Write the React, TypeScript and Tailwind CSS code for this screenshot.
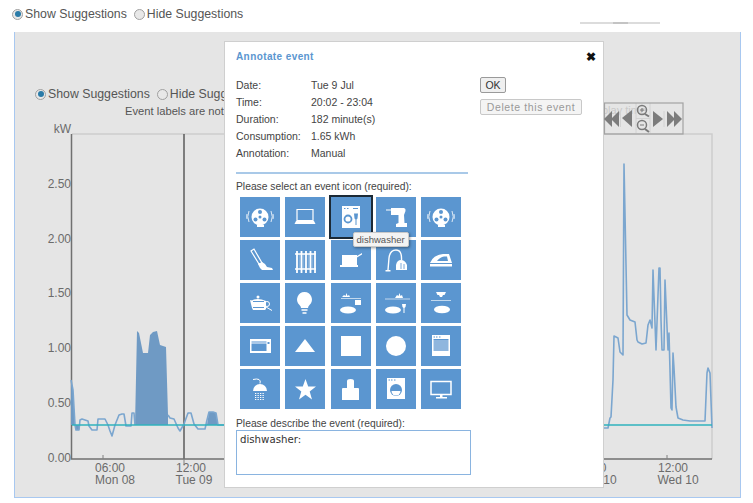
const linePts = "71,380 73,390 75,425 76,430 79,430 80,420 82,419 88,421 89,426 92,430 97,430 98,419 105,419 108,425 110,431 112,436 115,425 119,415 122,414 124,414 126,426 131,426 132,413 134,413 135,425"
const fillPts = "135,425 137,331 139,333 143,353 148,353 150,335 153,332 157,331 160,345 166,347 168,415 168,425"
const lineMid = "168,415 170,418 174,419 178,428 180,431 184,424 188,413 191,413 194,424 198,429 205,429 207,420 209,412 213,412 216,413 218,425 224,425"
const lineRight = "604,428 608,428 610,418 611,417 613,380 614,336 618,338 620,352 623,355 624,164 627,315 630,320 635,322 637,340 638,342 642,344 646,343 648,325 650,320 652,328 653,270 656,350 659,268 660,268 661,320 662,350 664,350 665,280 668,350 669,333 671,408 672,410 673,353 674,368 676,407 678,418 683,420 690,421 705,421 707,373 708,368 710,373 712,428"

function Radio({ checked }: { checked?: boolean }) {
  return (
    <span className="w-[11px] h-[11px] rounded-full border border-[#a0a0a0] bg-[#e8e8e8] flex items-center justify-center shrink-0">
      {checked && <span className="w-[6px] h-[6px] rounded-full bg-[#2a7ba8]" />}
    </span>
  )
}

function RadioRow() {
  return (
    <div className="flex items-center text-[12.300px] text-[#555] whitespace-nowrap">
      <Radio checked />
      <span className="ml-[2px]">Show Suggestions</span>
      <span className="w-[7px]" />
      <Radio />
      <span className="ml-[2px]">Hide Suggestions</span>
    </div>
  )
}

function Chart() {
  return (
    <svg width="727" height="466" viewBox="14 32 727 466" className="block">
      <path d="M72 134H712V459" fill="none" stroke="#cdcdcd" strokeWidth="1.5" />
      <path d="M71.500 134V459H712" fill="none" stroke="#707070" strokeWidth="1.5" />
      <path d="M184 134V459" stroke="#5a5a5a" strokeWidth="1.5" />
      <path d="M103 455V459M184 455V465M667 455V459" stroke="#808080" />
      <polygon points="71,380 73,390 75,425 71,425" fill="#6f9ac4" />
      <polygon points="76,425 76,430 79,430 80,425" fill="#6f9ac4" />
      <polygon points={fillPts} fill="#6f9ac4" />
      <polygon points="207,425 209,412 213,412 216,413 218,425" fill="#6f9ac4" />
      {[linePts, lineMid, lineRight].map((p) => (
        <polyline key={p} points={p} fill="none" stroke="#7ba6cf" strokeWidth="1.6" strokeLinejoin="round" />
      ))}
      <path d="M72 425H712" stroke="#2fb2bd" strokeWidth="1.5" />
      <g fill="#6b6b6b" fontSize="12" fontFamily="Liberation Sans, sans-serif" textAnchor="end">
        <text x="71" y="133">kW</text>
        <text x="71" y="188">2.50</text>
        <text x="71" y="243">2.00</text>
        <text x="71" y="297">1.50</text>
        <text x="71" y="352">1.00</text>
        <text x="71" y="407">0.50</text>
        <text x="71" y="462">0.00</text>
      </g>
      <g fill="#6b6b6b" fontSize="12" fontFamily="Liberation Sans, sans-serif" textAnchor="middle">
        <text x="110" y="472">06:00</text>
        <text x="115" y="484">Mon 08</text>
        <text x="191" y="472">12:00</text>
        <text x="194" y="484">Tue 09</text>
        <text x="603" y="472">0</text>
        <text x="610" y="484">10</text>
        <text x="673" y="472">12:00</text>
        <text x="678" y="484">Wed 10</text>
      </g>
      {/* pan / zoom controls */}
      <text x="646" y="114" fontSize="11" textAnchor="end" fill="#c9c9c9" fontFamily="Liberation Sans, sans-serif">display time</text>
      <path d="M620.500 111V127M636 103V134M650 103V134M664 111V127M636 118.500H650" stroke="#d2d2d2" />
      <rect x="604.500" y="103" width="78.500" height="31" fill="none" stroke="#a2a2a2" strokeWidth="1.2" />
      <g fill="#7c7c7c">
        <path d="M604 119L612 111V127ZM611 119L619 111V127Z" />
        <path d="M622 118L632 110V127Z" />
        <path d="M653 111L663 119L653 127Z" />
        <path d="M667 111L675 119L667 127ZM674 111L682 119L674 127Z" />
      </g>
      <g fill="none" stroke="#7a7a7a" strokeWidth="1.5">
        <circle cx="642" cy="110" r="4.500" />
        <path d="M645 114L649 116.500" strokeWidth="2" />
        <path d="M640 110H644M642 108V112" strokeWidth="1" />
        <circle cx="642" cy="125" r="4.500" />
        <path d="M645 129L649 132" strokeWidth="2" />
        <path d="M640 125H644" strokeWidth="1" />
      </g>
    </svg>
  )
}

const S = "white"
const B = "#5b96d0"

const fan = (
  <g>
    <circle cx="20" cy="20" r="8.500" fill={S} />
    <circle cx="20" cy="20" r="1.500" fill={B} />
    <circle cx="20" cy="15" r="2" fill={B} />
    <circle cx="15.500" cy="22.500" r="2" fill={B} />
    <circle cx="24.500" cy="22.500" r="2" fill={B} />
    <path d="M9 14q-2.500 6 0 11M31 14q2.500 6 0 11M7 17q-.7 3 0 5M33 17q.7 3 0 5" fill="none" stroke={S} strokeWidth=".8" />
    <path d="M17 28h7v2h-7z" fill={S} />
  </g>
)

const icons: React.ReactNode[] = [
  <g key="fan">{fan}</g>,
  // laptop
  <g key="laptop">
    <path d="M12 12.500h16v11H12z" fill="none" stroke={S} strokeWidth="1.200" />
    <path d="M11 24h18l1.500 3h-21z" fill={S} />
  </g>,
  // dishwasher
  <g key="dish">
    <path d="M11 9h18v22H11z" fill={S} />
    <path d="M13 11.500h1.500M16 11.500h1.500M22 11.500h5" stroke={B} strokeWidth="1" />
    <circle cx="17" cy="22" r="3.500" fill="none" stroke={B} strokeWidth="1.800" />
    <path d="M23 16.500h4l-.5 5-1 1v5.500h-1v-5.500l-1-1z" fill={B} />
  </g>,
  // drill
  <g key="drill">
    <path d="M10 12.500h5v1h-5z" fill={S} />
    <path d="M15 11h13q2 .5 1.500 3l-1.500 4 .5 8h2.500v4H20v-3l2.500-1v-8H15z" fill={S} />
  </g>,
  <g key="fan2">{fan}</g>,
  // mower
  <g key="mower">
    <path d="M11 11l3-2 8 14-3 1z" fill="none" stroke={S} strokeWidth="1.200" />
    <path d="M18 24l4-2 3 2 2 3 5 1 1 2H22l-2-2z" fill={S} />
  </g>,
  // radiator
  <g key="rad">
    <path d="M10 14h21M10 29h21" stroke={S} strokeWidth="1.500" />
    <path d="M12 11v22M16.500 11v22M21 11v22M25.500 11v22M30 11v22" stroke={S} strokeWidth="1.800" />
    <path d="M14.250 14v15M18.750 14v15M23.250 14v15M27.750 14v15" stroke={S} strokeWidth=".6" opacity=".5" />
  </g>,
  // hob
  <g key="hob">
    <path d="M11 15h15v10H11z" fill={S} />
    <path d="M26 16l5-3v1.500l-5 3z" fill={S} />
    <path d="M9 25h18v2H9z" fill={S} />
  </g>,
  // vacuum
  <g key="vac">
    <path d="M12 30l1-12q1-8 7-8t5.500 10" fill="none" stroke={S} strokeWidth="1.400" />
    <path d="M9.500 30h5v1.500h-5z" fill={S} />
    <path d="M20 30v-5q1-5 5-5t6 5v5z" fill={S} />
    <path d="M25 23v6M28 24v5" stroke={B} strokeWidth=".8" />
  </g>,
  // iron
  <g key="iron">
    <path d="M9 23q3-8 13-9h6l3 9z" fill={S} />
    <path d="M16 21q3-4 7-4.500h3l1 4.500z" fill={B} />
    <path d="M9 24h22v2.500H9z" fill={S} />
  </g>,
  // teapot
  <g key="pot">
    <circle cx="18" cy="14" r="1.500" fill={S} />
    <path d="M11 18q6-4 15 0z" fill={S} />
    <path d="M10 17l3 1v7h11v-7h2v8l-1 1H13l-1-2z" fill={S} />
    <path d="M13 19h11v5H13z" fill={S} />
    <path d="M26 24l6 3.500" stroke={S} strokeWidth="1" />
    <circle cx="27" cy="21" r="2.500" fill="none" stroke={S} strokeWidth="1" />
  </g>,
  // bulb
  <g key="bulb">
    <path d="M19.500 9a7.500 7.500 0 0 1 5 13q-1.500 1.500-1.500 3h-7q0-1.500-1.500-3a7.500 7.500 0 0 1 5-13z" fill={S} />
    <path d="M16.500 26h6v2h-6zM17.500 29h4v2h-4z" fill={S} opacity=".75" />
  </g>,
  // light over ellipse + square
  <g key="e1">
    <ellipse cx="17" cy="27" rx="8" ry="3.500" fill={S} />
    <path d="M10 15.500h20" stroke={S} strokeWidth=".8" opacity=".8" />
    <path d="M11 14l2-2 1.500 1 1-3 1 3 1.500-1 1 2z" fill={S} />
    <path d="M24 17h6v5h-6z" fill={S} />
  </g>,
  // light over ellipse + glass
  <g key="e2">
    <ellipse cx="17" cy="27" rx="8" ry="3.500" fill={S} />
    <path d="M9 16h25" stroke={S} strokeWidth=".8" opacity=".8" />
    <path d="M19 15l2-3 1.500 1 1-3 1 3 1.500-1 1 3z" fill={S} />
    <path d="M26 21h4l-.5 3-1 1v5h-1v-5l-1-1z" fill={S} />
  </g>,
  // lamp over ellipse
  <g key="e3">
    <ellipse cx="21" cy="26.500" rx="8" ry="3.800" fill={S} />
    <path d="M10 17.500h20" stroke={S} strokeWidth=".8" opacity=".8" />
    <path d="M15 9h10l-1.500 3h-1.500l-1 2h-2l-1-2h-1.500z" fill={S} />
  </g>,
  // microwave
  <g key="micro">
    <path d="M10 13h21v14H10z" fill={S} />
    <path d="M11.500 15h15v3h-15z" fill="#a9c8e8" />
    <path d="M11.500 18h15v7h-15z" fill={B} />
    <path d="M27.500 16h2v2h-2z" fill={B} />
  </g>,
  <path key="tri" d="M20 13l10 13H10z" fill={S} />,
  <path key="sq" d="M10 10h20v20H10z" fill={S} />,
  <circle key="circ" cx="20" cy="20" r="10" fill={S} />,
  // oven
  <g key="oven">
    <path d="M11 9h18v21H11z" fill={S} />
    <path d="M12.500 11h1.500M15 11h1.500M18 11h1.500" stroke={B} />
    <path d="M12.500 14h15v11h-15z" fill="#8fb6de" />
    <path d="M12.500 13.500h15" stroke={B} />
  </g>,
  // shower
  <g key="shower">
    <path d="M13 10.500q4-1 6 0t1 4" fill="none" stroke={S} strokeWidth="1" />
    <path d="M13 22a7 7 0 0 1 14 0z" fill={S} />
    <path d="M15 24.500h10M15 26.500h10M15 28.500h10M15 30.500h10" stroke={S} strokeWidth="1.200" strokeDasharray="1.300 1.200" />
  </g>,
  <path key="star" d="M20.500 10l2.700 7.500h7.800l-6.300 5 2.300 8-6.500-4.700-6.500 4.700 2.300-8-6.300-5h7.800z" fill={S} />,
  // box with top
  <g key="box">
    <path d="M11 20q0-1 1-1h15q1 0 1 1v11H11z" fill={S} />
    <path d="M16 12q0-2 3.500-2t3.500 2v7h-7z" fill={S} />
  </g>,
  // washer
  <g key="wash">
    <path d="M11 9h18v21H11z" fill={S} />
    <path d="M12.500 11h1.500M15 11h1.500M18 11h1.500" stroke={B} />
    <circle cx="20" cy="21" r="6" fill={B} />
    <path d="M15.500 22h9a4.500 4.500 0 0 1-9 0z" fill={S} />
  </g>,
  // monitor
  <g key="tv">
    <path d="M10 12.500h20v13H10z" fill="none" stroke={S} strokeWidth="1.500" />
    <path d="M19 26h2.500v2H19zM15 28h11v1.500H15z" fill={S} />
  </g>,
]

function IconGrid() {
  return (
    <div className="grid grid-cols-[repeat(5,40px)] gap-x-[5.300px] gap-y-[3px] ml-[4px] mt-[3px]">
      {icons.map((icon, i) => (
        <div key={i} className={i === 2 ? "relative w-[40px] h-[40px] bg-[#5b96d0] outline-2 outline-[#1c2a36]" : "w-[40px] h-[40px] bg-[#5b96d0]"}>
          <svg width="40" height="40" viewBox="0 0 40 40" className="block">{icon}</svg>
          {i === 2 && (
            <div className="absolute left-[22px] top-[35px] z-10 w-[56px] h-[15px] flex items-center justify-center bg-[#f3f3f3] border border-[#c9c9c9] rounded-[2px] shadow-[1px_1px_3px_rgba(0,0,0,0.4)] text-[9.500px] text-[#555]">
              dishwasher
            </div>
          )}
        </div>
      ))}
    </div>
  )
}

const details = [
  ["Date:", "Tue 9 Jul"],
  ["Time:", "20:02 - 23:04"],
  ["Duration:", "182 minute(s)"],
  ["Consumption:", "1.65 kWh"],
  ["Annotation:", "Manual"],
]

function Modal() {
  return (
    <div className="absolute left-[209px] top-[9px] w-[380px] h-[447px] bg-white border border-[#cfcfcf] px-[11px] text-[10.500px] text-[#444]">
      <div className="flex items-center justify-between h-[30px]">
        <span className="text-[#5b96d0] font-bold text-[10px] tracking-[0.4px] mt-[-1px]">Annotate event</span>
        <span className="text-[#111] text-[12px] font-bold mr-[-4px]">✖</span>
      </div>
      <div className="flex mt-[5px]">
        <div className="w-[232px]">
          {details.map(([k, v]) => (
            <div key={k} className="flex h-[17px] items-center">
              <span className="w-[75px]">{k}</span>
              <span>{v}</span>
            </div>
          ))}
          <div className="h-[2px] bg-[#a9c9e8] mt-[10px]" />
          <div className="mt-[5px] text-[10.300px]">Please select an event icon (required):</div>
          <IconGrid />
          <div className="mt-[7px] text-[10.300px]">Please describe the event (required):</div>
          <div className="w-[235px] h-[45px] mt-[-2px] border border-[#8ab4e0] px-[3px] pt-[1px] text-[10.200px] text-[#333] font-['DejaVu_Sans',sans-serif]">dishwasher:</div>
        </div>
        <div className="ml-[12px] flex flex-col items-start">
          <button className="h-[16px] w-[26px] border border-[#9a9a9a] rounded-[2px] bg-[#efefef] text-[10.500px] text-[#333] leading-none">OK</button>
          <button className="mt-[6px] h-[16px] w-[102px] border border-[#c8c8c8] rounded-[2px] bg-[#f4f4f4] text-[10.500px] text-[#999] tracking-[0.6px] leading-none">Delete this event</button>
        </div>
      </div>
    </div>
  )
}

export default function App() {
  return (
    <div className="w-[753px] h-[503px] bg-white overflow-hidden font-['Liberation_Sans',Arial,sans-serif]">
      <div className="h-[32px] pl-[12px] pr-[93px] pt-[5px] flex items-start justify-between">
        <RadioRow />
        <div className="w-[80px] h-[2px] mt-[17px] bg-[#dcdcdc] flex justify-center">
          <div className="w-[15px] h-[2px] bg-[#c4c4c4]" />
        </div>
      </div>
      <div className="relative ml-[14px] w-[727px] h-[466px] bg-[#e5e5e5] border border-[#a8c8f0] border-t-0">
        <div className="absolute left-[20px] top-[53px]">
          <RadioRow />
        </div>
        <div className="absolute left-[110px] top-[71px] text-[11.200px] text-[#555] whitespace-nowrap">Event labels are not</div>
        <div className="absolute left-[-1px] top-0">
          <Chart />
        </div>
        <Modal />
      </div>
    </div>
  )
}
